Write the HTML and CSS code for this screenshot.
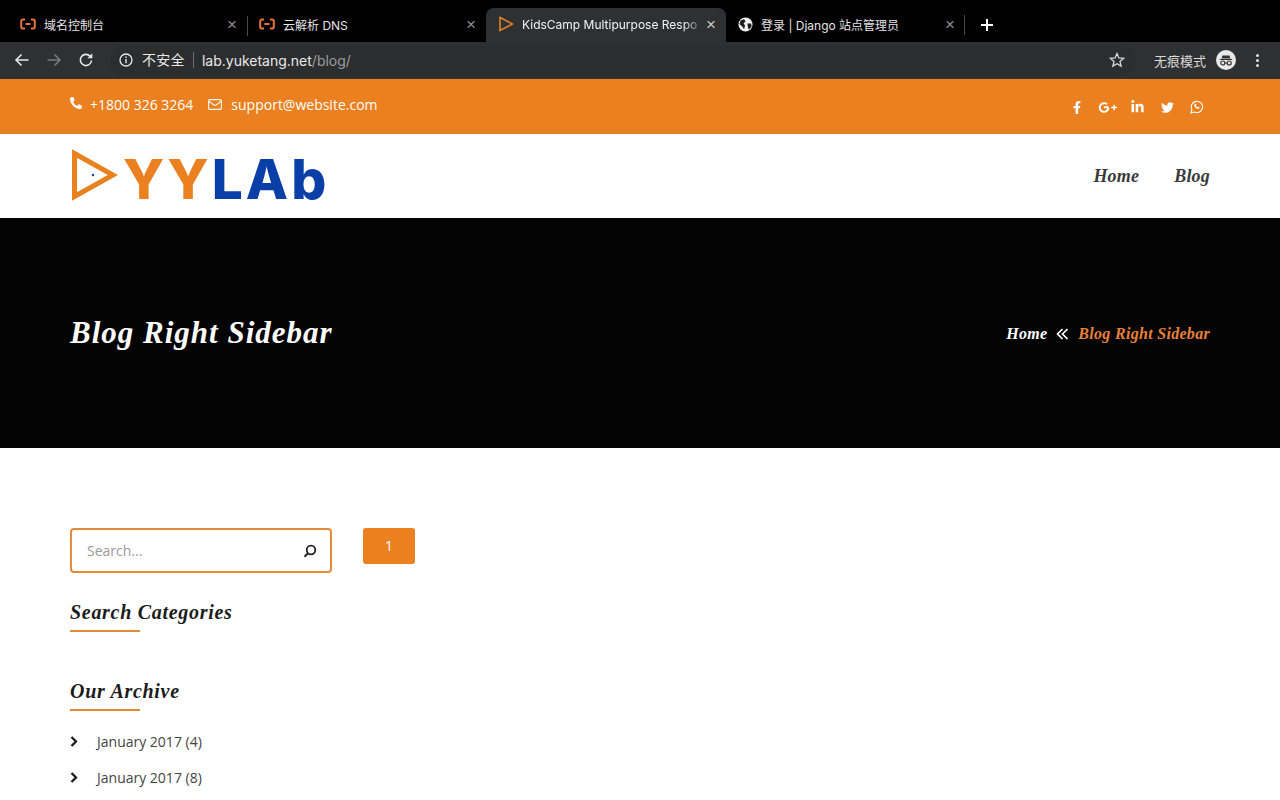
FILE: index.html
```html
<!DOCTYPE html>
<html lang="en">
<head>
    <meta charset="UTF-8">
    <meta name="viewport" content="width=device-width, initial-scale=1.0">
    <title>Blog Right Sidebar</title>
    <link rel="stylesheet" href="styles.css">
</head>
<body>
    <!-- browser chrome -->
    <div class="tab-strip">
        <div class="tab">
            <svg class="tab-icon" viewBox="0 0 16 12"><path d="M5 1.500H3A1.800 1.800 0 0 0 1.200 3.300v5.400A1.800 1.800 0 0 0 3 10.500h2M11 1.500h2a1.800 1.800 0 0 1 1.800 1.800v5.400a1.800 1.800 0 0 1-1.800 1.800h-2M5.500 6h5" fill="none" stroke="#e8743b" stroke-width="2"/></svg>
            <span class="tab-title">域名控制台</span>
            <span class="tab-close">×</span>
        </div>
        <div class="tab tab-sep">
            <svg class="tab-icon" viewBox="0 0 16 12"><path d="M5 1.500H3A1.800 1.800 0 0 0 1.200 3.300v5.400A1.800 1.800 0 0 0 3 10.500h2M11 1.500h2a1.800 1.800 0 0 1 1.800 1.800v5.400a1.800 1.800 0 0 1-1.800 1.800h-2M5.500 6h5" fill="none" stroke="#e8743b" stroke-width="2"/></svg>
            <span class="tab-title">云解析 DNS</span>
            <span class="tab-close">×</span>
        </div>
        <div class="tab tab-active">
            <svg class="tab-icon tab-icon-play" viewBox="0 0 16 16"><path d="M2 1.500 14.500 8 2 14.500z" fill="none" stroke="#e0832a" stroke-width="1.600"/></svg>
            <span class="tab-title tab-title-fade">KidsCamp Multipurpose Respo</span>
            <span class="tab-close">×</span>
        </div>
        <div class="tab">
            <svg class="tab-icon tab-icon-globe" viewBox="0 0 16 16"><circle cx="8" cy="8" r="7.500" fill="#f1f1f1"/><path d="M3 3.500 6.500 2.500 8 4.500 6 7 7.500 9 6.500 13 4.500 10 1.500 7.500zM10 7h4l.5 3-3 3.500-1-3z" fill="#1c1c1c"/></svg>
            <span class="tab-title">登录 | Django 站点管理员</span>
            <span class="tab-close">×</span>
        </div>
        <div class="tab-new">
            <svg viewBox="0 0 12 12" width="12" height="12"><path d="M6 0v12M0 6h12" stroke="#fff" stroke-width="2"/></svg>
        </div>
    </div>

    <div class="toolbar">
        <svg class="tool-btn" viewBox="0 0 16 16"><path d="M14.500 8H2M7.500 2.500 2 8l5.500 5.500" fill="none" stroke="#e6e6e6" stroke-width="1.600"/></svg>
        <svg class="tool-btn" viewBox="0 0 16 16"><path d="M1.500 8H14M8.500 2.500 14 8l-5.500 5.500" fill="none" stroke="#77797b" stroke-width="1.600"/></svg>
        <svg class="tool-btn" viewBox="0 0 16 16"><path d="M13.500 8.500A5.600 5.600 0 1 1 12 4.100" fill="none" stroke="#e6e6e6" stroke-width="1.600"/><path d="M14.300 1.300v4.900H9.400z" fill="#e6e6e6"/></svg>
        <div class="omnibox">
            <svg class="info-icon" viewBox="0 0 14 14"><circle cx="7" cy="7" r="6" fill="none" stroke="#e6e6e6" stroke-width="1.300"/><path d="M7 6v4.200M7 3.600v1.300" stroke="#e6e6e6" stroke-width="1.400"/></svg>
            <span class="not-secure">不安全</span>
            <span class="url"><span class="url-host">lab.yuketang.net</span>/blog/</span>
            <svg class="star-icon" viewBox="0 0 16 16"><path d="M8 1.600 9.900 6l4.700.4-3.600 3.100 1.100 4.600L8 11.700l-4.100 2.400L5 9.500 1.400 6.400 6.100 6z" fill="none" stroke="#d8d8d8" stroke-width="1.300"/></svg>
        </div>
        <span class="incognito-label">无痕模式</span>
        <svg class="incognito-icon" viewBox="0 0 20 20"><circle cx="10" cy="10" r="10" fill="#e8e8e8"/><path d="M6.500 5.500h7l1 3h-9zM3.800 9h12.400v1H3.800z" fill="#333"/><circle cx="6.800" cy="13" r="2" fill="none" stroke="#333" stroke-width="1.200"/><circle cx="13.200" cy="13" r="2" fill="none" stroke="#333" stroke-width="1.200"/><path d="M8.800 13h2.400" stroke="#333"/></svg>
        <div class="menu-dots"><i></i><i></i><i></i></div>
    </div>

    <!-- page -->
    <div class="top-bar">
        <div class="container top-bar-inner">
            <div class="contact">
                <svg class="contact-phone" viewBox="0 0 512 512"><path transform="matrix(-1 0 0 1 512 0)" fill="#fff" d="M493.400 24.600l-104-24c-11.300-2.600-22.900 3.300-27.500 13.900l-48 112c-4.200 9.800-1.400 21.300 6.900 28l60.600 49.600c-36 76.700-98.900 140.500-177.200 177.200l-49.600-60.600c-6.800-8.300-18.200-11.100-28-6.900l-112 48C3.900 366.500-2 378.100.6 389.400l24 104C27.100 504.200 36.700 512 48 512c256.100 0 464-207.500 464-464 0-11.200-7.700-20.900-18.600-23.400z"/></svg>
                <span>+1800 326 3264</span>
                <svg class="contact-mail" viewBox="0 0 14 11"><rect x=".6" y=".6" width="12.800" height="9.800" rx="1.300" fill="none" stroke="#fff" stroke-width="1.100"/><path d="M1 2.500 7 6.700l6-4.200" fill="none" stroke="#fff" stroke-width="1.100"/></svg>
                <span>support@website.com</span>
            </div>
            <div class="social">
                <a href="#"><svg class="social-f" viewBox="0 0 320 512"><path fill="#fff" d="M279.140 288l14.220-92.660h-88.910v-60.130c0-25.350 12.420-50.060 52.240-50.060h40.420V6.260S260.430 0 225.360 0c-73.220 0-121.080 44.380-121.080 124.720v70.620H22.890V288h81.390v224h100.170V288z"/></svg></a>
                <a href="#"><svg class="social-g" viewBox="0 0 20 12"><path d="M11 5.800H6.200M11 6A4.600 4.600 0 1 1 9.500 2.600" fill="none" stroke="#fff" stroke-width="2"/><path d="M14 6h6M17 3v6" stroke="#fff" stroke-width="1.500"/></svg></a>
                <a href="#"><svg class="social-in" viewBox="0 0 448 512"><path fill="#fff" d="M100.280 448H7.400V148.900h92.880zM53.790 108.100C24.090 108.100 0 83.500 0 53.800a53.790 53.790 0 0 1 107.580 0c0 29.700-24.100 54.300-53.790 54.300zM447.900 448h-92.680V302.400c0-34.700-.7-79.200-48.290-79.200-48.290 0-55.690 37.700-55.690 76.700V448h-92.780V148.900h89.080v40.800h1.300c12.400-23.500 42.690-48.300 87.880-48.300 94 0 111.280 61.900 111.280 142.300V448z"/></svg></a>
                <a href="#"><svg class="social-tw" viewBox="0 0 512 512"><path fill="#fff" d="M459.370 151.716c.325 4.548.325 9.097.325 13.645 0 138.720-105.583 298.558-298.558 298.558-59.452 0-114.680-17.219-161.137-47.106 8.447.974 16.568 1.299 25.340 1.299 49.055 0 94.213-16.568 130.274-44.832-46.132-.975-84.792-31.188-98.112-72.772 6.498.974 12.995 1.624 19.818 1.624 9.421 0 18.843-1.300 27.614-3.573-48.081-9.747-84.143-51.980-84.143-102.985v-1.299c13.969 7.797 30.214 12.670 47.431 13.319-28.264-18.843-46.781-51.005-46.781-87.391 0-19.492 5.197-37.360 14.294-52.954 51.655 63.675 129.300 105.258 216.365 109.807-1.624-7.797-2.599-15.918-2.599-24.040 0-57.828 46.782-104.934 104.934-104.934 30.213 0 57.502 12.670 76.670 33.137 23.715-4.548 46.456-13.320 66.599-25.340-7.798 24.366-24.366 44.833-46.132 57.827 21.117-2.273 41.584-8.122 60.426-16.243-14.292 20.791-32.161 39.308-52.628 54.253z"/></svg></a>
                <a href="#"><svg class="social-wa" viewBox="0 0 14 14"><path d="M1 13l.9-3.300A5.700 5.700 0 1 1 4.200 12z" fill="none" stroke="#fff" stroke-width="1.100"/><path d="M4.800 3.900c-.9.800-.7 2.200.6 3.600 1.400 1.400 2.800 1.800 3.800.9.400-.4.400-.9.100-1.100l-1-.5-.6.600c-.7-.2-1.500-1-1.800-1.800l.6-.6-.5-1.100c-.3-.3-.8-.3-1.200 0z" fill="#fff"/></svg></a>
            </div>
        </div>
    </div>

    <header class="site-nav">
        <div class="container site-nav-inner">
            <a class="logo" href="#">
                <svg class="logo-mark" viewBox="0 0 46 52"><path d="M2.500 4.500 41 26 2.500 47.500z" fill="none" stroke="#e8821f" stroke-width="5"/><circle cx="21" cy="26" r="1.200" fill="#0b3fa8"/></svg>
                <span class="logo-text"><span class="logo-yy">YY</span><span class="logo-lab">LAb</span></span>
            </a>
            <nav class="main-menu">
                <a href="#">Home</a>
                <a href="#">Blog</a>
            </nav>
        </div>
    </header>

    <section class="hero">
        <div class="container hero-inner">
            <h1 class="hero-title">Blog Right Sidebar</h1>
            <div class="breadcrumb">
                <a href="#">Home</a>
                <svg class="breadcrumb-sep" viewBox="0 0 13 12"><path d="M6.500 1 1.500 6l5 5M11.500 1l-5 5 5 5" fill="none" stroke="#fff" stroke-width="1.700"/></svg>
                <span class="breadcrumb-current">Blog Right Sidebar</span>
            </div>
        </div>
    </section>

    <main class="container content">
        <aside class="sidebar">
            <form class="search-box">
                <span class="search-placeholder">Search...</span>
                <svg class="search-icon" viewBox="0 0 14 14"><circle cx="8" cy="6" r="4.300" fill="none" stroke="#222" stroke-width="1.800"/><path d="M5 9.200 1.500 12.700" stroke="#222" stroke-width="2"/></svg>
            </form>
            <h3 class="widget-title">Search Categories</h3>
            <h3 class="widget-title widget-title-archive">Our Archive</h3>
            <ul class="archive-list">
                <li>
                    <svg class="chevron" viewBox="0 0 8 11"><path d="M1.500 1 6 5.500 1.500 10" fill="none" stroke="#1c1c1c" stroke-width="2.300"/></svg>
                    January 2017 (4)
                </li>
                <li>
                    <svg class="chevron" viewBox="0 0 8 11"><path d="M1.500 1 6 5.500 1.500 10" fill="none" stroke="#1c1c1c" stroke-width="2.300"/></svg>
                    January 2017 (8)
                </li>
            </ul>
        </aside>
        <section class="posts">
            <a class="page-btn" href="#">1</a>
        </section>
    </main>
</body>
</html>
```

FILE: styles.css
```css
:root {
    --orange: #ea801f;
    --chrome-bg: #2e3032;
    --text-dark: #1f1f1f;
    --heading-font: 'Liberation Serif', 'DejaVu Serif', serif;
    --ui-font: 'Inter', 'Noto Sans CJK SC', sans-serif;
    --body-font: 'Open Sans', 'Noto Sans', sans-serif;
}

* {
    margin: 0;
    padding: 0;
    box-sizing: border-box;
}

html, body {
    height: 800px;
    overflow: hidden;
}

body {
    font-family: var(--body-font);
    background-color: #fff;
    color: var(--text-dark);
}

a {
    color: inherit;
    text-decoration: none;
}

.container {
    width: 1140px;
    margin-left: 70px;
}

/* browser chrome */
.tab-strip {
    height: 42px;
    background-color: #000;
    padding: 8px 0 0 8px;
    display: flex;
    font-family: var(--ui-font);
}

.tab {
    width: 239px;
    height: 34px;
    display: flex;
    align-items: center;
    padding: 0 9px 2px 12px;
    color: #e4e4e4;
    font-size: 12px;
    position: relative;
}

.tab-sep::before {
    content: "";
    position: absolute;
    left: 0;
    top: 8px;
    height: 20px;
    width: 1px;
    background-color: #4a4a4a;
}

.tab-active {
    width: 240px;
    background-color: var(--chrome-bg);
    border-radius: 8px 8px 0 0;
    color: #f2f2f2;
}

.tab-icon {
    width: 16px;
    height: 12px;
    margin-right: 8px;
    flex-shrink: 0;
}

.tab-icon-play {
    height: 16px;
    margin-right: 8px;
}

.tab-icon-globe {
    width: 15px;
    height: 15px;
    margin-right: 8px;
}

.tab-title {
    flex: 1;
    white-space: nowrap;
    overflow: hidden;
}

.tab-title-fade {
    -webkit-mask-image: linear-gradient(90deg, #000 88%, transparent);
    mask-image: linear-gradient(90deg, #000 88%, transparent);
}

.tab-close {
    width: 12px;
    color: #8e8e8e;
    font-size: 17px;
    line-height: 1;
    text-align: center;
    font-family: 'Liberation Sans', sans-serif;
}

.tab-active .tab-close {
    color: #c8c8c8;
}

.tab-new {
    width: 44px;
    height: 20px;
    margin-top: 7px;
    border-left: 1px solid #4a4a4a;
    margin-left: -1px;
    display: flex;
    align-items: center;
    justify-content: center;
}

.toolbar {
    height: 37px;
    background-color: var(--chrome-bg);
    display: flex;
    align-items: center;
    padding: 0 21px 1px 14px;
    font-family: var(--ui-font);
}

.tool-btn {
    width: 16px;
    height: 16px;
    margin-right: 16px;
    flex-shrink: 0;
}

.omnibox {
    flex: 1;
    height: 29px;
    margin-right: 19px;
    padding: 0 10px 0 9px;
    display: flex;
    align-items: center;
    background-color: #2b2d2f;
    border-radius: 14px;
    font-size: 14px;
    color: #e8e8e8;
}

.info-icon {
    width: 14px;
    height: 14px;
    margin-right: 9px;
}

.not-secure {
    padding-right: 8px;
    margin-right: 8px;
    border-right: 1px solid #6a6c6e;
    line-height: 16px;
    letter-spacing: 0.3px;
}

.url {
    flex: 1;
    color: #9b9d9f;
}

.url-host {
    color: #eaeaea;
}

.star-icon {
    width: 16px;
    height: 16px;
}

.incognito-label {
    color: #d8d8d8;
    font-size: 13px;
    margin-right: 10px;
}

.incognito-icon {
    width: 20px;
    height: 20px;
    margin-right: 20px;
}

.menu-dots {
    display: flex;
    flex-direction: column;
    gap: 2px;
}

.menu-dots i {
    width: 3px;
    height: 3px;
    border-radius: 50%;
    background-color: #e0e0e0;
}

/* top bar */
.top-bar {
    height: 55px;
    background-color: var(--orange);
    color: #fff;
    font-size: 14px;
}

.top-bar-inner {
    height: 100%;
    padding-top: 14px;
    display: flex;
    justify-content: space-between;
}

.contact {
    display: flex;
    align-items: center;
    height: 22px;
}

.contact-phone {
    width: 12px;
    height: 12px;
    margin-right: 8px;
    margin-bottom: 2px;
}

.contact-mail {
    width: 14px;
    height: 11px;
    margin: 0 9px 0 15px;
}

.social {
    display: flex;
    align-items: center;
    height: 28px;
    margin-right: -2px;
}

.social a {
    width: 30px;
    display: flex;
    justify-content: center;
}

.social-f {
    width: 8px;
    height: 13px;
}

.social-g {
    width: 19px;
    height: 13px;
}

.social-in {
    width: 13px;
    height: 14px;
}

.social-tw {
    width: 13px;
    height: 13px;
}

.social-wa {
    width: 14px;
    height: 14px;
}

/* site nav */
.site-nav {
    height: 84px;
}

.site-nav-inner {
    height: 100%;
    display: flex;
    justify-content: space-between;
    align-items: center;
}

.logo {
    display: flex;
    align-items: center;
}

.logo-mark {
    width: 46px;
    height: 52px;
    margin-bottom: 2px;
    margin-left: 2px;
    margin-right: 5px;
}

.logo-text {
    font-family: 'Inter', 'DejaVu Sans', sans-serif;
    font-weight: 800;
    font-size: 55px;
    line-height: 52px;
    letter-spacing: 3px;
    padding-top: 5px;
}

.logo-yy {
    color: var(--orange);
}

.logo-lab {
    color: #0b3fa8;
}

.main-menu {
    display: flex;
    gap: 35px;
    font-family: var(--heading-font);
    font-style: italic;
    font-weight: 700;
    font-size: 18px;
    letter-spacing: 0.2px;
    color: #3a3a3a;
}

/* hero */
.hero {
    height: 230px;
    background-color: #040404;
    color: #fff;
}

.hero-inner {
    height: 100%;
    display: flex;
    justify-content: space-between;
    align-items: center;
}

.hero-title {
    font-family: var(--heading-font);
    font-style: italic;
    font-size: 31px;
    font-weight: 700;
    letter-spacing: 1px;
}

.breadcrumb {
    display: flex;
    align-items: center;
    padding-top: 2px;
    font-family: var(--heading-font);
    font-style: italic;
    font-weight: 700;
    font-size: 16px;
    letter-spacing: 0.3px;
}

.breadcrumb-sep {
    width: 13px;
    height: 12px;
    margin: 0 9px;
}

.breadcrumb-current {
    color: #e8803a;
}

/* content */
.content {
    display: flex;
    padding-top: 80px;
}

.sidebar {
    width: 262px;
    margin-right: 31px;
}

.search-box {
    height: 45px;
    border: 2px solid #e58a37;
    border-radius: 4px;
    padding: 0 13px 0 15px;
    display: flex;
    align-items: center;
    justify-content: space-between;
}

.search-placeholder {
    font-size: 14px;
    color: #9a9a9a;
}

.search-icon {
    width: 14px;
    height: 14px;
}

.widget-title {
    position: relative;
    margin-top: 25px;
    height: 34px;
    font-family: var(--heading-font);
    font-style: italic;
    font-weight: 700;
    font-size: 20px;
    line-height: 28px;
    letter-spacing: 0.7px;
    color: #1c1c1c;
}

.widget-title::after {
    content: "";
    position: absolute;
    left: 0;
    bottom: 0;
    width: 70px;
    height: 2px;
    background-color: #e58a37;
}

.widget-title-archive {
    margin-top: 45px;
}

.archive-list {
    list-style: none;
    margin-top: 12px;
    font-size: 14px;
    color: #444;
}

.archive-list li {
    height: 36px;
    display: flex;
    align-items: center;
}

.chevron {
    width: 8px;
    height: 11px;
    margin-right: 19px;
}

.page-btn {
    display: block;
    width: 52px;
    height: 36px;
    line-height: 36px;
    text-align: center;
    background-color: var(--orange);
    border-radius: 3px;
    color: #fff;
    font-size: 14px;
}
```
